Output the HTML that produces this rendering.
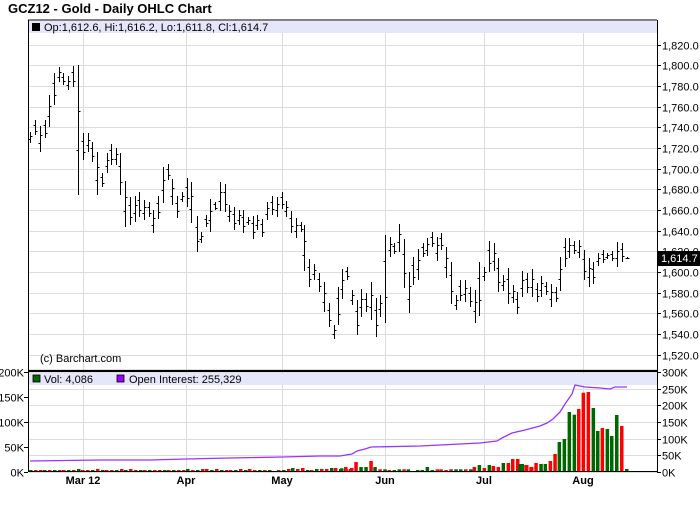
<!DOCTYPE html>
<html><head><meta charset="utf-8">
<style>
html,body{margin:0;padding:0;background:#fff;width:700px;height:512px;overflow:hidden}
svg{display:block}
text{font-family:"Liberation Sans",sans-serif;}
</style></head>
<body>
<svg id="c" width="700" height="512" xmlns="http://www.w3.org/2000/svg">
<text x="8" y="13" font-size="13" font-weight="bold" fill="#000">GCZ12 - Gold - Daily OHLC Chart</text>
<g id="grid"></g>
<rect x="29" y="21" width="628" height="12" fill="#e6e6fa"/>
<rect x="32" y="23" width="8" height="8" fill="#000"/>
<text x="44" y="31" font-size="11">Op:1,612.6, Hi:1,616.2, Lo:1,611.8, Cl:1,614.7</text>
<rect x="29" y="373" width="628" height="12" fill="#e6e6fa"/>
<rect x="33" y="375" width="7" height="7" fill="#006600" stroke="#000" stroke-width="0.8"/>
<text x="44" y="383" font-size="11">Vol: 4,086</text>
<rect x="117" y="375" width="7" height="7" fill="#9900ff" stroke="#000" stroke-width="0.8"/>
<text x="129" y="383" font-size="11">Open Interest: 255,329</text>
<text x="40" y="362" font-size="11">(c) Barchart.com</text>
<g id="bars"></g>
<g id="vol"></g>
<polyline id="oi" fill="none" stroke="#9933ff" stroke-width="1.3"/>
<line x1="28" y1="20" x2="657" y2="20" stroke="#000"/>
<line x1="28.5" y1="20" x2="28.5" y2="472" stroke="#000"/>
<line x1="657.5" y1="20" x2="657.5" y2="472" stroke="#000"/>
<line x1="28" y1="371" x2="658" y2="371" stroke="#000" stroke-width="2.2"/>
<line x1="28" y1="471.5" x2="658" y2="471.5" stroke="#000"/>
<g id="axes"></g>
<rect x="658" y="251" width="42" height="15" fill="#000"/>
<text x="661" y="262" font-size="11" fill="#fff">1,614.7</text>
<g font-size="11" font-weight="bold" text-anchor="middle">
<text x="83" y="484">Mar 12</text>
<text x="186" y="484">Apr</text>
<text x="282" y="484">May</text>
<text x="385" y="484">Jun</text>
<text x="484" y="484">Jul</text>
<text x="583" y="484">Aug</text>
</g>
</svg>
<script>
var NS="http://www.w3.org/2000/svg";
function el(p,t,a,txt){var e=document.createElementNS(NS,t);for(var k in a)e.setAttribute(k,a[k]);if(txt)e.textContent=txt;document.getElementById(p).appendChild(e);return e;}
// grid
function yp(p){return 334-(p-1540)*1.0335;}
for(var p=1520;p<=1820;p+=20){var y=Math.round(yp(p))+0.5;
 el('grid','line',{x1:29,y1:y,x2:657,y2:y,stroke:'#dcdcdc'});
 el('axes','line',{x1:657,y1:y,x2:661,y2:y,stroke:'#000'});
 el('axes','text',{x:662,y:y+4,'font-size':11},p.toLocaleString('en-US')+'.0');}
[83,186,282,385,484,583].forEach(function(x){el('grid','line',{x1:x+0.5,y1:21,x2:x+0.5,y2:472,stroke:'#dcdcdc'});});
for(var i=0;i<=6;i++){var y=Math.round(472-i*16.67)+0.5;
 if(y>386)el('grid','line',{x1:29,y1:y,x2:657,y2:y,stroke:'#dcdcdc'});
 el('axes','line',{x1:657,y1:y,x2:661,y2:y,stroke:'#000'});
 el('axes','text',{x:662,y:y+4,'font-size':11},(i*50)+'K');}
for(var i=0;i<=4;i++){var y=Math.round(472-i*25)+0.5;
 el('axes','line',{x1:24,y1:y,x2:28,y2:y,stroke:'#000'});
 el('axes','text',{x:24,y:y+4,'font-size':11,'text-anchor':'end'},(i*50)+'K');}
// price bars
var a=[[30,245,280],[45,210,255],[60,228,305],[75,210,265],[88,135,230],[102,68,165],[117,50,95],[130,68,105],[145,78,120],[160,48,110],[175,45,435],[188,250,330],[203,250,305],[217,275,335],[232,305,435],[246,370,410],[260,310,370],[274,282,345],[288,295,345],[300,308,435],[316,393,530],[330,440,525],[344,437,515],[358,427,500],[373,450,510],[386,455,500],[400,480,550],[415,437,508],[430,352,458],[443,342,390],[457,388,465],[472,437,505],[487,425,455],[500,385,470],[514,395,518],[530,497,605],[542,545,580],[557,495,530],[571,448,545],[585,455,480],[600,396,482],[614,403,487],[628,465,515],[642,470,540],[656,480,525],[670,480,550],[684,500,525],[698,498,568],[712,495,540],[727,508,560],[742,455,510],[756,438,495],[770,440,500],[785,425,478],[798,452,502],[812,482,550],[827,505,563],[842,515,545],[853,525,662],[868,627,712],[882,643,690],[897,668,725],[912,697,785],[926,760,832],[941,825,868],[953,712,825],[967,657,747],[982,650,690]];
var b=[[67,270,315],[80,300,405],[93,268,350],[107,280,335],[122,245,360],[137,295,412],[151,285,350],[165,105,370],[179,110,172],[193,130,162],[208,72,155],[222,118,265],[236,215,338],[250,172,255],[264,148,240],[278,130,170],[292,115,168],[307,95,140],[322,110,182],[334,100,150],[348,140,235],[363,185,312],[377,285,330],[391,240,302],[405,240,305],[420,262,322],[434,270,368],[448,185,348],[462,200,242],[477,122,215],[491,130,212],[505,175,275],[520,225,272],[534,205,312],[548,255,308],[562,275,342],[577,212,290],[591,218,280],[605,208,292],[620,250,305],[634,228,290],[648,245,285],[662,252,322],[677,262,305],[690,172,272],[704,115,200],[718,115,175],[733,122,162],[746,120,175],[762,150,240],[776,175,260],[790,185,252],[805,158,198],[818,150,188],[832,158,178],[846,152,182],[860,127,200],[875,130,185],[890,170,178]];
var bars=[];
a.forEach(function(r){bars.push([20+r[0]/3,50+r[1]/3,50+r[2]/3]);});
b.forEach(function(r){bars.push([330+r[0]/3,200+r[1]/3,200+r[2]/3]);});
var d='';
bars.forEach(function(r,i){var x=Math.round(r[0])+0.5,t=Math.round(r[1]),bt=Math.round(r[2]);if(bt-t<2)bt=t+2;
 var o=Math.round(t+(bt-t)*(i%2?0.3:0.65)),c=Math.round(t+(bt-t)*(i%2?0.7:0.35));
 d+='M'+x+' '+t+'V'+bt+'M'+(x-2)+' '+(o+0.5)+'H'+x+'M'+x+' '+(c+0.5)+'H'+(x+2);});
el('bars','path',{d:d,stroke:'#000','stroke-width':1,fill:'none'});
// volume
var G='#006600',R='#ff0000';
var vx=30,n=0;
var early=[1,1,1,1,1,1,1,1,1,1,2,1,1,1,2,1,1,1,1,2,1,2,1,1,1,1,1,1,1,1,1,1,1,2,1,1,2,2,1,2,1,1,1,1,2,1,2,1,1,1,1,0,1,1,2,3,2,3,1,1,2,2,2,3,3,2,4,2];
for(var i=0;i<68&&i<early.length;i++){var x=30+i*4.77;var h=early[i];if(h)el('vol','rect',{x:Math.round(x)-1,y:471-h,width:3.5,height:h,fill:(i*7%5<2)?G:R});}
var v6=[[5,205,G],[20,208,R],[35,204,R],[48,186,R],[63,201,G],[78,201,G],[93,183,R],[105,201,G],[120,208,R],[135,208,G],[148,210,R],[163,210,G],[178,208,G],[192,208,R],[205,208,G],[233,210,G],[247,210,G],[262,201,G],[277,210,G],[292,208,R],[303,208,R],[318,210,R],[333,208,R],[348,208,G],[362,208,G],[377,208,R],[392,208,G],[403,201,R],[418,195,G],[433,204,R],[448,195,G],[460,198,R],[475,201,R],[490,189,G],[505,189,R],[518,177,R],[533,177,R],[547,192,G],[560,195,R],[575,201,R]];
v6.forEach(function(r){var x=340+r[0]/3,t=400+r[1]/3;el('vol','rect',{x:(x-1.7).toFixed(1),y:t.toFixed(1),width:3.5,height:(471-t).toFixed(1),fill:r[2]});});
var v2=[[0,252,G],[18,255,R],[33,261,R],[48,249,R],[63,252,G],[76,252,G],[91,243,R],[105,222,R],[118,186,G],[133,177,G],[148,96,G],[163,104,G],[176,87,R],[190,38,R],[205,36,R],[220,84,G],[233,153,G],[247,144,R],[262,147,G],[275,168,G],[290,105,G],[305,138,R],[320,267,G]];
v2.forEach(function(r){var x=520+r[0]/3,t=380+r[1]/3;el('vol','rect',{x:(x-1.7).toFixed(1),y:t.toFixed(1),width:3.5,height:(471-t).toFixed(1),fill:r[2]});});
var oi=[[30,461],[100,460],[150,460],[186,459],[230,458],[282,457],[320,456],[340,456],[352,454],[357,451],[365,449],[371,447],[420,446],[480,443],[497,441],[502,438],[512,433],[525,430],[540,426],[547,423],[553,419],[560,412],[565,404],[572,394],[575,385],[585,387],[600,388],[610,389],[615,387],[627,387]];
document.getElementById('oi').setAttribute('points',oi.map(function(p){return p.join(',');}).join(' '));
</script>
</body></html>
